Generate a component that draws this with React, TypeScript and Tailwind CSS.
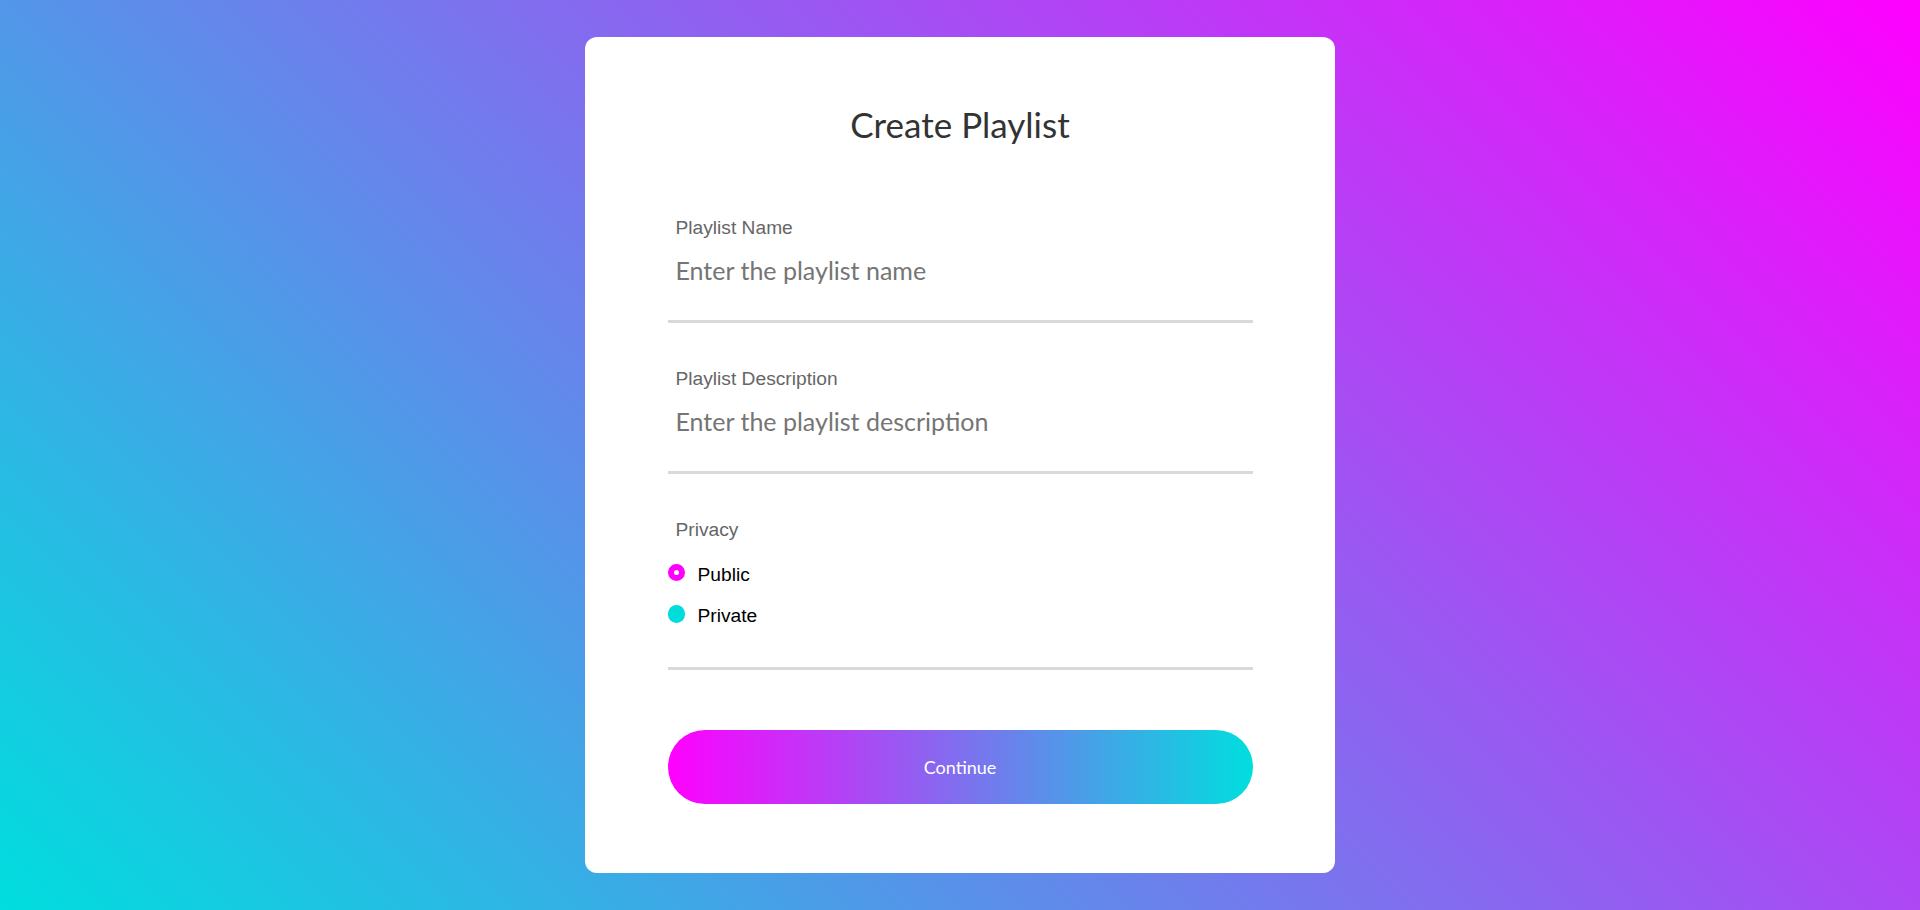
import React from 'react';

interface FieldProps {
  label: string;
  placeholder: string;
}

const TextField: React.FC<FieldProps> = ({ label, placeholder }) => {
  return (
    <div className="flex flex-col border-b-[3px] border-[#d9d9d9] px-2 pb-[35px]">
      <label className="font-['Liberation_Sans',Arial,sans-serif] text-[19.2px] leading-[22px] text-[#666666]">
        {label}
      </label>
      <input
        type="text"
        placeholder={placeholder}
        className="mt-4 h-[30px] w-full bg-transparent font-['Lato',sans-serif] text-[25px] leading-[30px] text-[#333333] outline-none placeholder:text-[#757575]"
      />
    </div>
  );
};

interface RadioProps {
  label: string;
  checked?: boolean;
}

const RadioOption: React.FC<RadioProps> = ({ label, checked }) => {
  return (
    <label className="flex h-[22px] cursor-pointer items-center gap-[13px]">
      {checked ? (
        <span className="-mt-[5px] box-border h-[17px] w-[17px] shrink-0 rounded-full border-[6px] border-[#ff00ff] bg-white" />
      ) : (
        <span className="-mt-[5px] h-[18px] w-[17px] shrink-0 rounded-full bg-[#00dcdc]" />
      )}
      <span className="font-['Liberation_Sans',Arial,sans-serif] text-[19.2px] leading-[22px] text-black">
        {label}
      </span>
    </label>
  );
};

const App: React.FC = () => {
  return (
    <div className="flex min-h-screen w-full items-center justify-center bg-[linear-gradient(45deg,#00dede,#ff00ff)]">
      <div className="flex w-[750px] flex-col rounded-xl bg-white pt-[67px] pb-[69px]">
        <h1 className="text-center font-['Lato',sans-serif] text-[35px] leading-[40px] font-normal text-[#333333]">
          Create Playlist
        </h1>

        <form className="mx-auto mt-[73px] flex w-[585px] flex-col" onSubmit={(e) => e.preventDefault()}>
          <TextField label="Playlist Name" placeholder="Enter the playlist name" />

          <div className="mt-[45px]">
            <TextField label="Playlist Description" placeholder="Enter the playlist description" />
          </div>

          <div className="mt-[45px] flex flex-col border-b-[3px] border-[#d9d9d9] pb-[40px]">
            <span className="px-2 font-['Liberation_Sans',Arial,sans-serif] text-[19.2px] leading-[22px] text-[#666666]">
              Privacy
            </span>
            <div className="mt-[23px] flex flex-col gap-[19px]">
              <RadioOption label="Public" checked />
              <RadioOption label="Private" />
            </div>
          </div>

          <button
            type="submit"
            className="mt-[60px] h-[74px] w-full rounded-full bg-[linear-gradient(90deg,#ff00ff,#00dede)] font-['Lato',sans-serif] text-[18px] text-white"
          >
            Continue
          </button>
        </form>
      </div>
    </div>
  );
};

export default App;
